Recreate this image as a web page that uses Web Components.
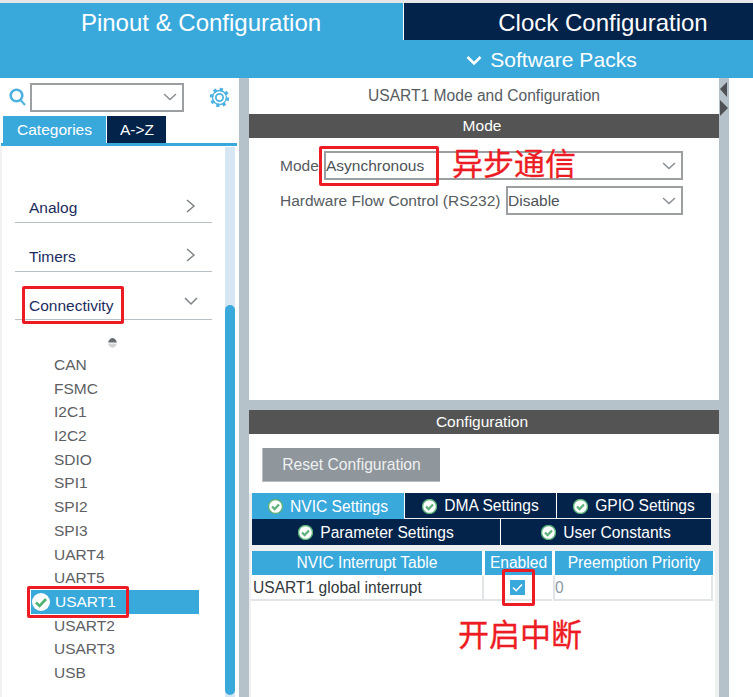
<!DOCTYPE html>
<html lang="en">
<head>
<meta charset="utf-8">
<title>Pinout & Configuration</title>
<style>
  html, body { margin: 0; height: 697px; overflow: hidden; background: #fff; font-family: "Liberation Sans", Arial, sans-serif; }
</style>
</head>
<body>
<cube-app></cube-app>
<script>
const CHEVRON_DOWN = '<svg width="14" height="8" viewBox="0 0 14 8"><path d="M1 1l6 5.5L13 1" fill="none" stroke="#8a8f94" stroke-width="1.5"/></svg>';
const OK_ICON = '<svg width="15" height="15" viewBox="0 0 15 15"><circle cx="7.5" cy="7.5" r="7" fill="#fff" stroke="#5cb27a" stroke-width="1.4"/><path d="M4 7.5l2.6 2.6L11 5.4" fill="none" stroke="#5cb27a" stroke-width="2.2"/></svg>';

// Bar of the two big tabs and the Software Packs line
class TopBar extends HTMLElement {
  constructor() {
    super();
    this.attachShadow({ mode: 'open' }).innerHTML = `
      <style>
        :host { display: block; background: #e4e6e7; padding-top: 3px; color: #fff; }
        .tabs { display: grid; grid-template-columns: 403px 1fr; height: 37px; background: #39a9dc; }
        .tab { display: flex; align-items: center; justify-content: center; font-size: 24px; padding-top: 2px; box-sizing: border-box; }
        .tab.on { padding-right: 1px; }
        .tab.off { background: #03234b; border-left: 1px solid #fff; padding-left: 49px; }
        .packs { height: 38px; background: #39a9dc; display: flex; align-items: center; justify-content: center; gap: 8px; font-size: 21px; padding: 2px 0 0 350px; box-sizing: border-box; letter-spacing: .05px; }
      </style>
      <div class="tabs"><div class="tab on">Pinout &amp; Configuration</div><div class="tab off">Clock Configuration</div></div>
      <div class="packs"><svg width="16" height="11" viewBox="0 0 16 11"><path d="M1.5 2l6.5 6.5L14.5 2" fill="none" stroke="#fff" stroke-width="2.6"/></svg><span>Software Packs</span></div>`;
  }
}
customElements.define('top-bar', TopBar);

// Select box drawn with its little arrow
class ComboBox extends HTMLElement {
  constructor() {
    super();
    this.attachShadow({ mode: 'open' }).innerHTML = `
      <style>
        :host { display: flex; align-items: center; box-sizing: border-box; border: 2px solid #9b9fa2; background: #fff; font-size: 15.5px; color: #4d5358; padding: 0 5px 0 0; height: 29px; }
        span { flex: 1; white-space: nowrap; }
      </style>
      <span><slot></slot></span>${CHEVRON_DOWN}`;
  }
}
customElements.define('combo-box', ComboBox);

// Collapsible category line of the left tree
class CategoryRow extends HTMLElement {
  constructor() {
    super();
    const open = this.hasAttribute('open');
    const arrow = open
      ? '<path d="M1 1l6 6 6-6"/>'
      : '<path d="M3 1l7 6-7 6"/>';
    this.attachShadow({ mode: 'open' }).innerHTML = `
      <style>
        :host { display: flex; justify-content: space-between; align-items: flex-end; box-sizing: border-box; height: 49px; margin-left: 15px; width: 197px; border-bottom: 1px solid #b9c1c7; padding: 0 14px 4px 14px; font-size: 15.5px; line-height: 20px; color: #1c2c5e; }
        svg { margin-bottom: 5px; }
      </style>
      <span><slot></slot></span>
      <svg width="14" height="14" viewBox="0 0 14 14"><g fill="none" stroke="#7d8387" stroke-width="1.5">${arrow}</g></svg>`;
  }
}
customElements.define('category-row', CategoryRow);

// Peripherals under Connectivity
class PeripheralList extends HTMLElement {
  constructor() {
    super();
    const items = ['CAN','FSMC','I2C1','I2C2','SDIO','SPI1','SPI2','SPI3','UART4','UART5','USART1','USART2','USART3','USB'];
    const rows = items.map(name => name === 'USART1'
      ? `<div class="row sel"><svg class="mark" width="20" height="20" viewBox="0 0 20 20"><circle cx="10" cy="10" r="9" fill="#fff"/><path d="M5 10.500l3.600 3.400L15 7" fill="none" stroke="#4fb270" stroke-width="2.600"/></svg>${name}</div>`
      : `<div class="row">${name}</div>`).join('');
    this.attachShadow({ mode: 'open' }).innerHTML = `
      <style>
        :host { display: block; font-size: 15.5px; color: #5d6062; }
        .sort { height: 33px; box-sizing: border-box; padding-top: 12px; display: flex; justify-content: center; align-items: center; }
        .row { height: 23.7px; line-height: 23.7px; padding-left: 54px; position: relative; width: 145px; }
        .sel { color: #fff; padding-left: 55px; width: 144px; background: linear-gradient(#39a9dc, #39a9dc) 31px 0 / 168px 25px no-repeat; }
        .mark { position: absolute; left: 31px; top: 2px; }
      </style>
      <div class="sort"><svg width="11" height="12" viewBox="0 0 11 12"><path d="M1 5.400C2 2.500 4 1 5.500 1S9 2.500 10 5.400z" fill="#666b70"/><path d="M1 6.600h9C9 9.500 7 11 5.500 11S2 9.500 1 6.600z" fill="#d2d5d8"/></svg></div>
      ${rows}`;
  }
}
customElements.define('peripheral-list', PeripheralList);

// Left column: search, tabs and tree with scrollbar
class CategoryPanel extends HTMLElement {
  constructor() {
    super();
    this.attachShadow({ mode: 'open' }).innerHTML = `
      <style>
        :host { display: flex; flex-direction: column; background: #fff; height: 619px; }
        .search { display: flex; align-items: center; height: 38px; padding-left: 9px; }
        combo-box { width: 154px; margin-left: 3px; }
        .gear { margin-left: 25px; }
        .tabs { display: flex; gap: 1px; margin-left: 3px; height: 27px; font-size: 15.5px; color: #fff; }
        .tabs div { display: flex; align-items: center; justify-content: center; }
        .cat { width: 103px; background: #39a9dc; }
        .az { width: 59px; background: #03234b; padding-left: 1px; box-sizing: border-box; }
        .rule { height: 3px; background: #39a9dc; margin: 0 2px 0 1px; }
        .body { flex: 1; display: flex; margin-top: 1px; border-left: 2px solid #f0f1f2; min-height: 0; }
        .tree { width: 223px; padding-top: 27px; box-sizing: border-box; margin-right: 0; }
        .tree > * { margin-left: -2px; }
        .track { width: 10px; background: #d6e6f3; padding-top: 158px; box-sizing: border-box; }
        .thumb { height: 390px; background: #39a9dc; border-radius: 5px; }
      </style>
      <div class="search">
        <svg width="18" height="18" viewBox="0 0 18 18"><circle cx="7.500" cy="7.500" r="5.800" fill="none" stroke="#4db2e2" stroke-width="2.600"/><path d="M11.500 12l4.500 5" stroke="#4db2e2" stroke-width="2"/></svg>
        <combo-box></combo-box>
        <svg class="gear" width="21" height="21" viewBox="0 0 21 21"><circle cx="10.500" cy="10.500" r="8" fill="none" stroke="#4db2e2" stroke-width="3.400" stroke-dasharray="3.100 3.180"/><circle cx="10.500" cy="10.500" r="7" fill="none" stroke="#4db2e2" stroke-width="1.300"/><circle cx="10.500" cy="10.500" r="3.600" fill="none" stroke="#4db2e2" stroke-width="1.800"/></svg>
      </div>
      <div class="tabs"><div class="cat">Categories</div><div class="az">A-&gt;Z</div></div>
      <div class="rule"></div>
      <div class="body">
        <div class="tree">
          <category-row style="margin-left:13px">Analog</category-row>
          <category-row style="margin-left:13px">Timers</category-row>
          <category-row open style="margin-left:13px;height:48px;padding-bottom:3px">Connectivity</category-row>
          <peripheral-list></peripheral-list>
        </div>
        <div class="track"><div class="thumb"></div></div>
      </div>`;
  }
}
customElements.define('category-panel', CategoryPanel);

// Dark title band used by Mode and Configuration
class SectionBand extends HTMLElement {
  constructor() {
    super();
    this.attachShadow({ mode: 'open' }).innerHTML = `
      <style>
        :host { display: block; height: 24px; line-height: 24px; background: #535453; color: #fff; text-align: center; font-size: 15.5px; padding-right: 4px; }
      </style><slot></slot>`;
  }
}
customElements.define('section-band', SectionBand);

class ModePanel extends HTMLElement {
  constructor() {
    super();
    this.attachShadow({ mode: 'open' }).innerHTML = `
      <style>
        :host { display: block; height: 322px; background: #fff; color: #565c61; font-size: 15.5px; }
        .title { height: 36px; line-height: 36px; text-align: center; font-size: 15.6px; }
        .rows { padding: 13px 36px 0 31px; display: flex; flex-direction: column; gap: 6px; }
        .row { display: flex; align-items: center; white-space: nowrap; }
        .row span { flex: none; }
        combo-box { flex: 1; }
      </style>
      <div class="title">USART1 Mode and Configuration</div>
      <section-band>Mode</section-band>
      <div class="rows">
        <div class="row"><span style="width:44px">Mode</span><combo-box>Asynchronous</combo-box></div>
        <div class="row"><span style="width:226px">Hardware Flow Control (RS232)</span><combo-box>Disable</combo-box></div>
      </div>`;
  }
}
customElements.define('mode-panel', ModePanel);

class ConfigTabs extends HTMLElement {
  constructor() {
    super();
    const tab = (label, style, cls = '') => `<div class="tab ${cls}" style="${style}">${OK_ICON}<span>${label}</span></div>`;
    this.attachShadow({ mode: 'open' }).innerHTML = `
      <style>
        :host { display: block; margin-left: 3px; width: 459px; font-size: 15.6px; color: #fff; }
        .r { display: flex; gap: 1px; background: #fff; }
        .r1 { height: 25px; }
        .r2 { height: 26px; margin-top: 1px; }
        .tab { background: #03234b; display: flex; align-items: center; justify-content: center; gap: 7px; padding-top: 1px; box-sizing: border-box; }
        .tab.on { background: #39a9dc; height: 26px; }
      </style>
      <div class="r r1">
        ${tab('NVIC Settings', 'width:152px', 'on')}
        ${tab('DMA Settings', 'width:151px')}
        ${tab('GPIO Settings', 'flex:1')}
      </div>
      <div class="r r2">
        ${tab('Parameter Settings', 'width:248px')}
        ${tab('User Constants', 'flex:1')}
      </div>`;
  }
}
customElements.define('config-tabs', ConfigTabs);

class NvicTable extends HTMLElement {
  constructor() {
    super();
    this.attachShadow({ mode: 'open' }).innerHTML = `
      <style>
        :host { display: block; background: #fff; margin: 6px 4px 0 2px; height: 148px; padding: 0 0 0 1px; font-size: 15.6px; }
        .grid { display: grid; grid-template-columns: 230px 67px 158px; column-gap: 3px; width: 461px; }
        .h { height: 24px; line-height: 24px; background: #39a9dc; color: #fff; text-align: center; margin-bottom: 1px; }
        .c { height: 23px; line-height: 23px; border-bottom: 2px solid #e2e5e8; color: #33383c; white-space: nowrap; margin-left: -1px; padding-left: 2px; }
        .c.en { display: flex; justify-content: center; align-items: center; border-left: 2px solid #e2e5e8; margin-left: -3px; padding: 0 2px 0 0; }
        .c.pr { color: #8d9aa8; border-left: 2px solid #e2e5e8; border-right: 2px solid #e2e5e8; padding-left: 0; margin-left: -2px; }
        .box { width: 15px; height: 15px; background: #39a9dc; display: block; }
      </style>
      <div class="grid">
        <div class="h">NVIC Interrupt Table</div><div class="h">Enabled</div><div class="h">Preemption Priority</div>
        <div class="c">USART1 global interrupt</div>
        <div class="c en"><svg class="box" viewBox="0 0 15 15"><path d="M3 7.500l3.200 3.200L12 4.500" fill="none" stroke="#fff" stroke-width="1.600"/></svg></div>
        <div class="c pr">0</div>
      </div>`;
  }
}
customElements.define('nvic-table', NvicTable);

class ConfigPanel extends HTMLElement {
  constructor() {
    super();
    this.attachShadow({ mode: 'open' }).innerHTML = `
      <style>
        :host { display: block; height: 287px; background: #eff0f2; font-size: 15.5px; }
        .top { background: #fff; padding: 14px 0 11px 13px; }
        .reset { width: 178px; height: 34px; box-sizing: border-box; background: #8f969c; border-bottom: 1px solid #b9bec2; border-left: 1px solid #b9bec2; color: #eef0f1; display: flex; align-items: center; justify-content: center; font-size: 15.7px; }
      </style>
      <section-band>Configuration</section-band>
      <div class="top"><div class="reset">Reset Configuration</div></div>
      <config-tabs></config-tabs>
      <nvic-table></nvic-table>`;
  }
}
customElements.define('config-panel', ConfigPanel);

// Red marks somebody drew on the screenshot, they sit over the UI
class RedBox extends HTMLElement {
  constructor() {
    super();
    this.attachShadow({ mode: 'open' }).innerHTML = `
      <style>
        :host { position: absolute; box-sizing: border-box; border: 3px solid #ed1c24; border-radius: 2px; }
      </style>`;
  }
}
customElements.define('red-box', RedBox);

class RedNote extends HTMLElement {
  constructor() {
    super();
    this.attachShadow({ mode: 'open' }).innerHTML = `
      <style>
        :host { position: absolute; color: #ed1c24; font: 400 31px/36px "Noto Sans CJK SC", sans-serif; -webkit-text-stroke: .3px #ed1c24; white-space: nowrap; }
      </style><slot></slot>`;
  }
}
customElements.define('red-note', RedNote);

class CubeApp extends HTMLElement {
  constructor() {
    super();
    this.attachShadow({ mode: 'open' }).innerHTML = `
      <style>
        :host { display: block; position: relative; width: 753px; height: 697px; overflow: hidden; background: #fff; }
        .main { display: grid; grid-template-columns: 239px 490px; height: 619px; }
        .col { background: #b6c2c9; padding-left: 10px; padding-right: 10px; box-sizing: border-box; }
        .stack { width: 470px; display: flex; flex-direction: column; gap: 10px; }
        .grip { position: absolute; left: 719px; top: 78px; }
      </style>
      <top-bar></top-bar>
      <div class="main">
        <category-panel></category-panel>
        <div class="col"><div class="stack"><mode-panel></mode-panel><config-panel></config-panel></div></div>
      </div>
      <svg class="grip" width="10" height="40" viewBox="0 0 10 40"><path d="M8 4v15L1 11z" fill="#4f5254"/><path d="M1 22v16l8-8z" fill="#4f5254"/></svg>
      <red-box style="left:319px;top:146px;width:120px;height:40px"></red-box>
      <red-box style="left:22px;top:286px;width:102px;height:38px"></red-box>
      <red-box style="left:27px;top:586px;width:102px;height:32px"></red-box>
      <red-box style="left:502px;top:569px;width:33px;height:37px"></red-box>
      <red-note style="left:452px;top:144px">异步通信</red-note>
      <red-note style="left:458px;top:615px">开启中断</red-note>`;
  }
}
customElements.define('cube-app', CubeApp);
</script>
</body>
</html>
